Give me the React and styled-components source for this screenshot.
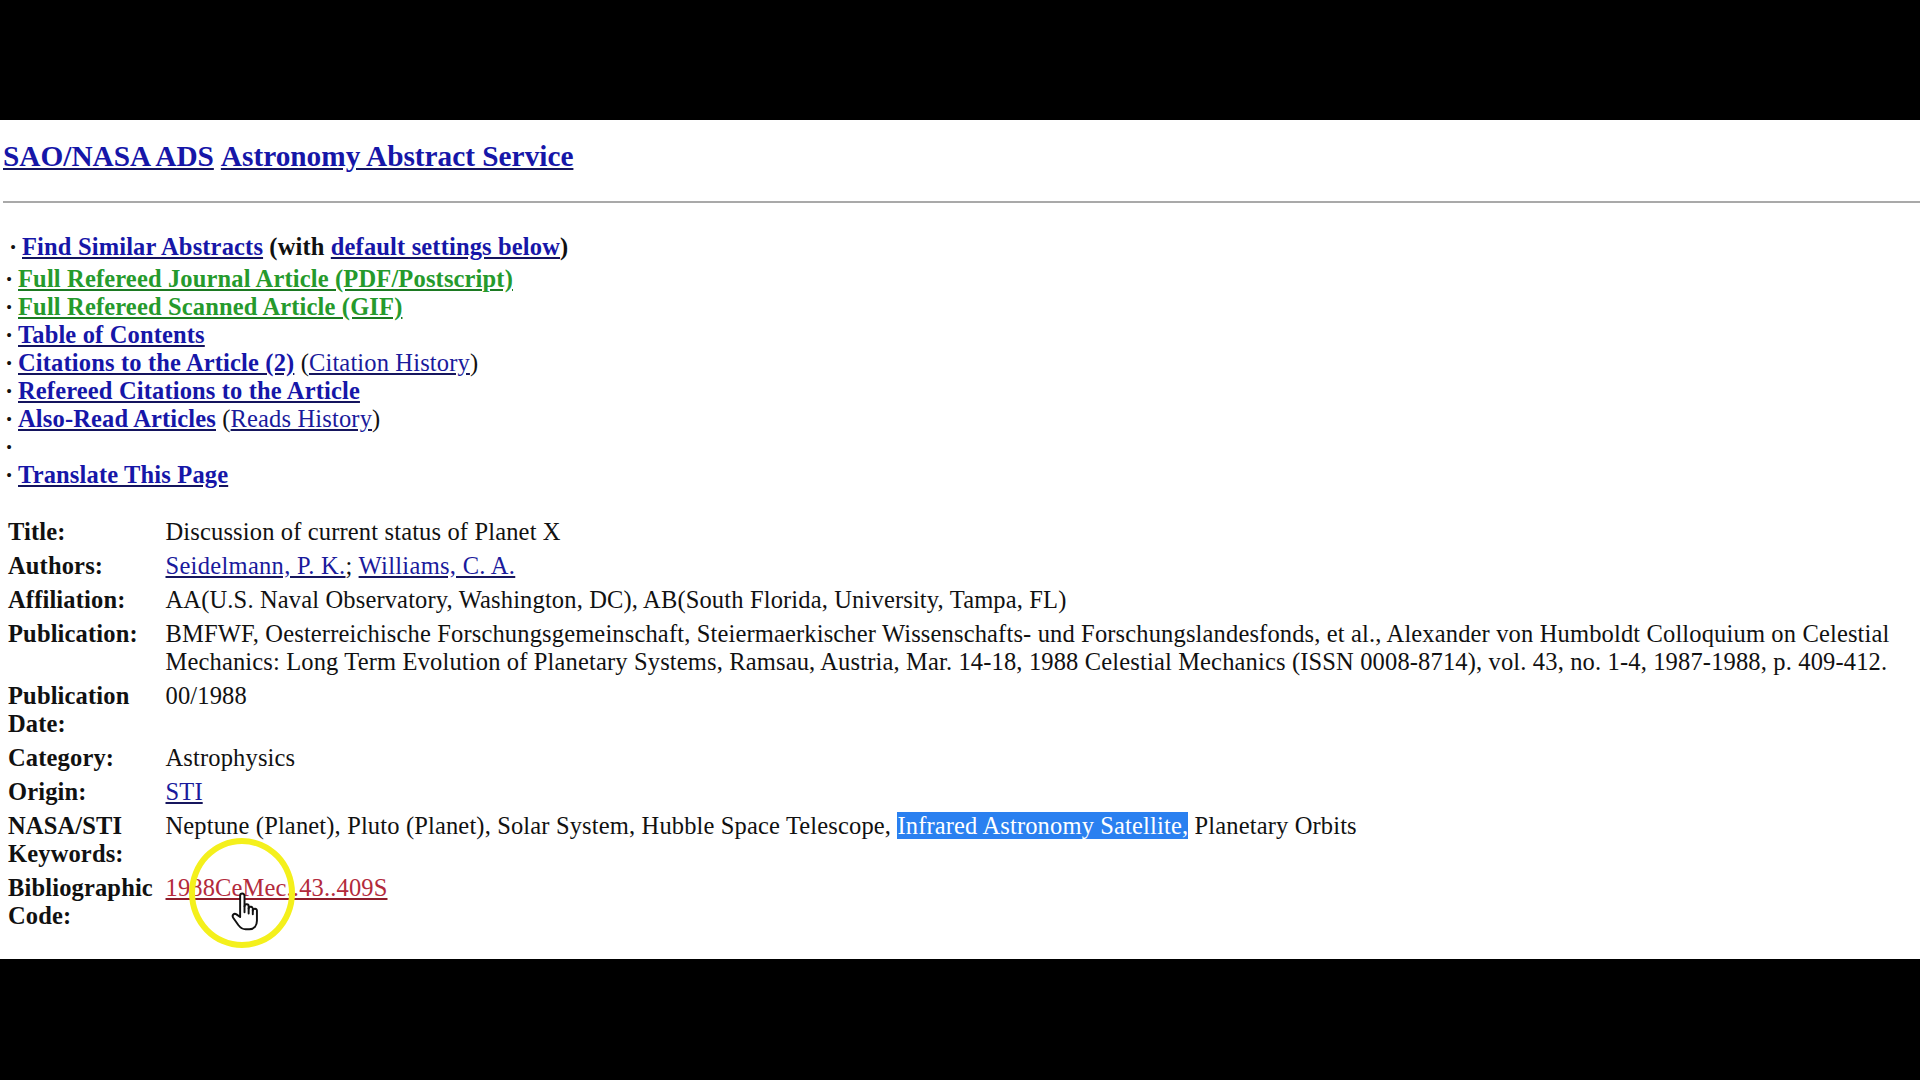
import React from 'react';
import styled, { createGlobalStyle } from 'styled-components';

const GlobalStyle = createGlobalStyle`
  html, body {
    margin: 0;
    padding: 0;
    background: #000;
  }
  body {
    font-family: "Liberation Serif", "Times New Roman", serif;
    color: #111;
  }
`;

const Page = styled.div`
  width: 1920px;
  height: 1080px;
  display: flex;
  flex-direction: column;
  overflow: hidden;
`;

const Band = styled.div`
  height: ${({ h }) => h}px;
  background: #000;
  flex: none;
`;

const Main = styled.main`
  flex: 1;
  background: #fff;
  display: flex;
  flex-direction: column;
`;

const Heading = styled.h2`
  margin: 0;
  padding: 19px 0 0 3px;
  font-size: 29.3px;
  line-height: 34px;
  font-weight: bold;
  display: flex;
  gap: 7px;
`;

const Rule = styled.hr`
  margin: 28px 0 0 3px;
  height: 2px;
  border: 0;
  background: #a9a9a9;
`;

const Links = styled.ul`
  list-style: none;
  margin: 30px 0 0;
  padding: 0 0 0 5px;
  font-size: 24.5px;
  letter-spacing: 0.15px;
  line-height: 28px;
`;

const LinkRow = styled.li`
  display: flex;
  white-space: pre;
  height: 28px;
  padding-left: ${({ first }) => (first ? '4px' : '0')};
  margin-bottom: ${({ first }) => (first ? '4px' : '0')};
  font-weight: ${({ first }) => (first ? 'bold' : 'normal')};
`;

const Dot = styled.span`
  width: 13px;
  flex: none;
  font-weight: bold;
`;

const Strong = styled.a`
  color: ${({ tone }) => (tone === 'green' ? '#259a2c' : '#1616a8')};
  font-weight: bold;
  text-decoration: underline;
  text-decoration-color: ${({ tone }) => (tone === 'green' ? '#1c7a22' : '#14145e')};
`;

const Plain = styled.a`
  color: ${({ tone }) => (tone === 'red' ? '#b32a3c' : '#1a1a9c')};
  text-decoration: underline;
  text-decoration-color: ${({ tone }) => (tone === 'red' ? '#8e1d2b' : '#16165e')};
`;

const Meta = styled.table`
  margin: 26px 0 0 5px;
  border-collapse: collapse;
  font-size: 24.5px;
  letter-spacing: 0.15px;
  line-height: 28px;
`;

const Label = styled.th`
  width: 152px;
  padding: 3px 0 3px 3px;
  text-align: left;
  vertical-align: top;
  font-weight: bold;
`;

const Value = styled.td`
  padding: 3px 0 3px 5.5px;
  vertical-align: top;
  position: relative;
`;

const Authors = styled.span`
  letter-spacing: 0.3px;
`;

const Selected = styled.span`
  background: #2a80f0;
  color: #fff;
`;

const Ring = styled.div`
  position: absolute;
  left: 29px;
  top: -33px;
  width: 94px;
  height: 98px;
  border: 6px solid #f4f01c;
  border-radius: 50%;
  pointer-events: none;
`;

const Hand = styled.svg`
  position: absolute;
  left: 71px;
  top: 20px;
  width: 28px;
  height: 40px;
  pointer-events: none;
`;

function Cursor() {
  return (
    <Hand viewBox="0 0 23 32" fill="#fff" stroke="#111" strokeWidth="1.6" strokeLinejoin="round" strokeLinecap="round">
      <path d="M7.5 19V3.5a1.8 1.8 0 0 1 3.6 0V12a1.7 1.7 0 0 1 3.4.4V14a1.7 1.7 0 0 1 3.4.4v1.2a1.7 1.7 0 0 1 3.4.4v8c0 4-2.3 7-6.3 7h-3c-3 0-4.5-1.5-6-3.5l-4.2-6c-1.3-2 .7-4 2.7-2.7L7.5 21z" />
      <path d="M11.1 12v5M14.5 14v4M17.9 15.6v3" />
    </Hand>
  );
}

const rows = [
  ['Title:', 'Discussion of current status of Planet X'],
  ['Authors:', <Authors><Plain href="#">Seidelmann, P. K.</Plain>; <Plain href="#">Williams, C. A.</Plain></Authors>],
  ['Affiliation:', 'AA(U.S. Naval Observatory, Washington, DC), AB(South Florida, University, Tampa, FL)'],
  ['Publication:', 'BMFWF, Oesterreichische Forschungsgemeinschaft, Steiermaerkischer Wissenschafts- und Forschungslandesfonds, et al., Alexander von Humboldt Colloquium on Celestial Mechanics: Long Term Evolution of Planetary Systems, Ramsau, Austria, Mar. 14-18, 1988 Celestial Mechanics (ISSN 0008-8714), vol. 43, no. 1-4, 1987-1988, p. 409-412.'],
  ['Publication Date:', '00/1988'],
  ['Category:', 'Astrophysics'],
  ['Origin:', <Plain href="#">STI</Plain>],
  ['NASA/STI Keywords:', <>Neptune (Planet), Pluto (Planet), Solar System, Hubble Space Telescope, <Selected>Infrared Astronomy Satellite,</Selected> Planetary Orbits</>],
  ['Bibliographic Code:', <><Plain href="#" tone="red">1988CeMec..43..409S</Plain><Ring /><Cursor /></>],
];

export default function App() {
  return (
    <Page>
      <GlobalStyle />
      <Band h={120} />
      <Main>
        <Heading>
          <Strong href="#">SAO/NASA ADS</Strong>
          <Strong href="#">Astronomy Abstract Service</Strong>
        </Heading>
        <Rule />
        <Links>
          <LinkRow first>
            <Dot>·</Dot>
            <Strong href="#">Find Similar Abstracts</Strong> (with <Strong href="#">default settings below</Strong>)
          </LinkRow>
          <LinkRow><Dot>·</Dot><Strong href="#" tone="green">Full Refereed Journal Article (PDF/Postscript)</Strong></LinkRow>
          <LinkRow><Dot>·</Dot><Strong href="#" tone="green">Full Refereed Scanned Article (GIF)</Strong></LinkRow>
          <LinkRow><Dot>·</Dot><Strong href="#">Table of Contents</Strong></LinkRow>
          <LinkRow><Dot>·</Dot><Strong href="#">Citations to the Article (2)</Strong> (<Plain href="#">Citation History</Plain>)</LinkRow>
          <LinkRow><Dot>·</Dot><Strong href="#">Refereed Citations to the Article</Strong></LinkRow>
          <LinkRow><Dot>·</Dot><Strong href="#">Also-Read Articles</Strong> (<Plain href="#">Reads History</Plain>)</LinkRow>
          <LinkRow><Dot>·</Dot></LinkRow>
          <LinkRow><Dot>·</Dot><Strong href="#">Translate This Page</Strong></LinkRow>
        </Links>
        <Meta>
          <tbody>
            {rows.map(([label, value]) => (
              <tr key={label}>
                <Label>{label}</Label>
                <Value>{value}</Value>
              </tr>
            ))}
          </tbody>
        </Meta>
      </Main>
      <Band h={121} />
    </Page>
  );
}
